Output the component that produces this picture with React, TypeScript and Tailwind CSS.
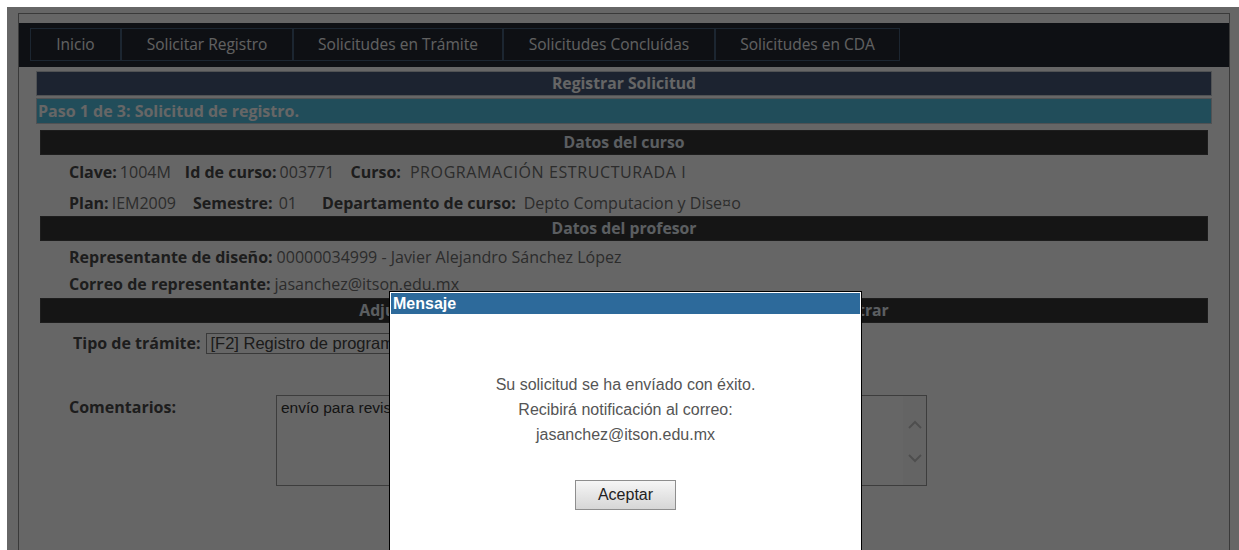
import React from "react";

const tabs = [
  { label: "Inicio", w: "w-[91px]" },
  { label: "Solicitar Registro", w: "w-[172px]" },
  { label: "Solicitudes en Trámite", w: "w-[210px]" },
  { label: "Solicitudes Concluídas", w: "w-[212px]" },
  { label: "Solicitudes en CDA", w: "w-[185px]" },
];

function SectionBar({ children }: { children: React.ReactNode }) {
  return (
    <div className="h-[25px] border border-[#4a4a4a] bg-[#353535] text-center text-[15.75px] font-bold leading-[23px] text-[#e4ecf3]">
      {children}
    </div>
  );
}

function Field({ label, value, gap = "ml-[3px]" }: { label: string; value: string; gap?: string }) {
  return (
    <span className="whitespace-nowrap">
      <span className="font-bold text-[#4a4a4a]">{label}</span>
      <span className={`${gap} text-[#6e6e6e]`}>{value}</span>
    </span>
  );
}

export default function App() {
  return (
    <div className="h-[550px] overflow-hidden bg-white pl-[7px] pt-[7px] font-['Open_Sans',sans-serif]">
      <div className="relative h-full overflow-hidden bg-white">
        <div className="ml-[11px] mr-[9px] mt-[6px] h-[600px] border-x border-t border-[#919191]">
          {/* top menu */}
          <div className="mt-[9px] h-[44px] bg-[#232832] pl-[11px] pt-[5px]">
            <nav className="flex">
              {tabs.map((t) => (
                <div
                  key={t.label}
                  className={`${t.w} h-[33px] border border-[#48607a] text-center text-[15.5px] leading-[31px] text-[#f2f2f2]`}
                >
                  {t.label}
                </div>
              ))}
            </nav>
          </div>

          <div className="px-[17px] pt-[4px]">
            <div className="h-[25px] border border-[#c8ccd2] bg-[#465878] text-center text-[15.75px] font-bold leading-[23px] text-white">
              Registrar Solicitud
            </div>
            <div className="mt-[2px] h-[26px] border border-[#c8ccd2] bg-[#53c0e0] pl-px text-[16px] font-bold leading-[24px] text-white">
              Paso 1 de 3: Solicitud de registro.
            </div>

            <div className="mt-[6px] px-[4px] text-[16px]">
              <SectionBar>Datos del curso</SectionBar>
              <div className="mt-[4px] flex h-[26px] items-center pl-[29px]">
                <Field label="Clave:" value="1004M" />
                <span className="ml-[14px]">
                  <Field label="Id de curso:" value="003771" />
                </span>
                <span className="ml-[16px]">
                  <Field label="Curso:" value="PROGRAMACIÓN ESTRUCTURADA I" gap="ml-[9px] tracking-[0.6px]" />
                </span>
              </div>
              <div className="mt-[5px] flex h-[26px] items-center pl-[29px]">
                <Field label="Plan:" value="IEM2009" />
                <span className="ml-[17px]">
                  <Field label="Semestre:" value="01" gap="ml-[6px]" />
                </span>
                <span className="ml-[25px]">
                  <Field label="Departamento de curso:" value="Depto Computacion y Dise¤o" gap="ml-[8px]" />
                </span>
              </div>

              <SectionBar>Datos del profesor</SectionBar>
              <div className="mt-[3px] flex h-[26px] items-center pl-[29px]">
                <Field label="Representante de diseño:" value="00000034999 - Javier Alejandro Sánchez López" gap="ml-[4px]" />
              </div>
              <div className="mt-px flex h-[26px] items-center pl-[29px]">
                <Field label="Correo de representante:" value="jasanchez@itson.edu.mx" gap="ml-[4px]" />
              </div>

              <div className="mt-px">
                <SectionBar>Adjuntar el programa de curso y documentos de soporte a registrar</SectionBar>
              </div>

              {/* tipo de trámite */}
              <div className="mt-[8px] flex items-center pl-[33px]">
                <span className="font-bold text-[#4a4a4a]">Tipo de trámite:</span>
                <div className="ml-[5px] h-[21px] w-[330px] overflow-hidden border border-[#8f8f8f] bg-white pl-[4px] font-['Liberation_Sans',Arial,sans-serif] text-[16.5px] leading-[19px] whitespace-nowrap text-[#444]">
                  [F2] Registro de programa de curso nuevo
                </div>
              </div>

              {/* comentarios */}
              <div className="mt-[40px] flex pl-[29px]">
                <span className="w-[207px] font-bold text-[#4a4a4a]">Comentarios:</span>
                <div className="flex h-[91px] w-[651px] border border-[#9a9a9a] bg-white">
                  <div className="flex-1 pl-[4px] font-['Liberation_Sans',Arial,sans-serif] text-[15.5px] leading-[24px] text-[#333]">
                    envío para revisión
                  </div>
                  <div className="flex w-[23px] flex-col items-center gap-[25px] bg-[#fafafa] pt-[24px]">
                    <svg width="14" height="9" viewBox="0 0 14 9" fill="none" stroke="#c4c4c4" strokeWidth="2">
                      <path d="M1 8 L7 2 L13 8" />
                    </svg>
                    <svg width="14" height="9" viewBox="0 0 14 9" fill="none" stroke="#c4c4c4" strokeWidth="2">
                      <path d="M1 1 L7 7 L13 1" />
                    </svg>
                  </div>
                </div>
              </div>
            </div>
          </div>
        </div>

        {/* modal backdrop */}
        <div className="absolute inset-0 bg-black/60" />

        {/* message dialog */}
        <div className="absolute left-[382px] top-[284px] h-[280px] w-[473px] border border-black bg-white p-px font-['Liberation_Sans',Arial,sans-serif]">
          <div className="h-[21px] bg-[#2d6a9b] pl-[2px] text-[16px] font-bold leading-[21px] text-white">Mensaje</div>
          <div className="pt-[58px] text-center text-[16px] leading-[25px] text-[#555]">
            <p>Su solicitud se ha envíado con éxito.</p>
            <p>Recibirá notificación al correo:</p>
            <p>jasanchez@itson.edu.mx</p>
          </div>
          <div className="mt-[33px] flex justify-center">
            <button className="h-[30px] w-[101px] border border-[#8e8e8e] bg-linear-to-b from-[#f6f6f6] to-[#d6d6d6] text-[16px] text-[#222]">
              Aceptar
            </button>
          </div>
        </div>
      </div>
    </div>
  );
}
